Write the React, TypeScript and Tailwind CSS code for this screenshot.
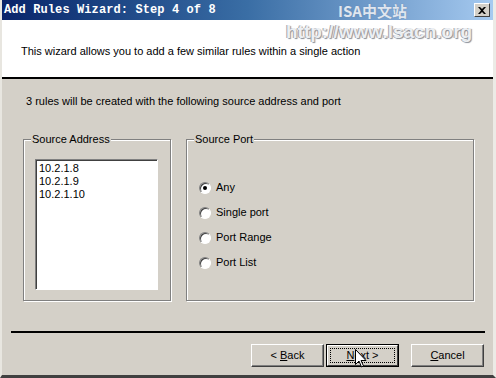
import React from 'react';

const ui = "font-['Liberation_Sans',Arial,sans-serif] text-[11px] leading-[13px] text-black";

function GroupBox({ label, className, children }: { label: string; className: string; children?: React.ReactNode }) {
  return (
    <div className={`relative border border-[#808080] shadow-[inset_1px_1px_0_#fff,1px_1px_0_#fff] ${className}`}>
      <span className="absolute -top-[7px] left-[7px] bg-[#d4d0c8] px-[1px]">{label}</span>
      {children}
    </div>
  );
}

function Radio({ label, checked }: { label: string; checked?: boolean }) {
  return (
    <div className="flex items-center gap-[5px] h-[13px]">
      <span className="w-[12px] h-[12px] rounded-full bg-white border border-t-[#808080] border-l-[#808080] border-b-white border-r-white shadow-[inset_1px_1px_0_#404040] flex items-center justify-center">
        {checked && <span className="w-[4px] h-[4px] rounded-full bg-black" />}
      </span>
      <span>{label}</span>
    </div>
  );
}

function Button({ children, isDefault }: { children: React.ReactNode; isDefault?: boolean }) {
  if (isDefault) {
    return (
      <div className="w-[73px] h-[23px] border border-black">
        <div className="w-full h-full border border-t-white border-l-white border-b-[#404040] border-r-[#404040] bg-[#d4d0c8] p-[2px]">
          <div className="w-full h-full border border-dotted border-black flex items-center justify-center">{children}</div>
        </div>
      </div>
    );
  }
  return (
    <div className="w-[73px] h-[23px] border border-t-white border-l-white border-b-[#404040] border-r-[#404040] shadow-[inset_-1px_-1px_0_#808080] bg-[#d4d0c8] flex items-center justify-center">
      {children}
    </div>
  );
}

export default function App() {
  return (
    <div className={`relative w-[496px] h-[378px] overflow-hidden bg-[#d4d0c8] border-l-[2px] border-l-[#e8e6e0] border-r-[3px] border-r-[#ecebe6] border-b-[3px] border-b-[#404040] flex flex-col ${ui}`}>
      {/* title bar */}
      <div className="h-[20px] shrink-0 bg-gradient-to-r from-[#0a246a] via-[#3a6ea5] to-[#a6caf0] flex items-center justify-between pl-[2px] pr-[3px]">
        <span className="font-['Liberation_Mono',monospace] font-bold text-[12px] text-white tracking-[0.1px]">Add Rules Wizard: Step 4 of 8</span>
        <div className="w-[16px] h-[14px] bg-[#d4d0c8] border border-t-white border-l-white border-b-[#404040] border-r-[#404040] flex items-center justify-center">
          <svg width="8" height="7" viewBox="0 0 8 7">
            <path d="M0 0h2l2 2 2-2h2L5 3.5 8 7H6L4 5 2 7H0l3-3.5z" fill="#000" />
          </svg>
        </div>
      </div>

      {/* header */}
      <div className="h-[57px] shrink-0 bg-white pl-[19px] pt-[25px]">
        This wizard allows you to add a few similar rules within a single action
      </div>
      <div className="h-[2px] shrink-0 bg-black" />

      {/* body */}
      <div className="flex-1 flex flex-col pl-[9px] pr-[9px]">
        <div className="pl-[15px] mt-[16px]">3 rules will be created with the following source address and port</div>

        <div className="flex gap-[15px] pl-[12px] mt-[31px]">
          <GroupBox label="Source Address" className="w-[148px] h-[162px] pt-[19px] pl-[11px]">
            <div className="w-[123px] h-[131px] bg-white border border-t-[#808080] border-l-[#808080] border-b-white border-r-white shadow-[inset_1px_1px_0_#404040] pl-[3px] pt-[2px]">
              <div>10.2.1.8</div>
              <div>10.2.1.9</div>
              <div>10.2.1.10</div>
            </div>
          </GroupBox>
          <GroupBox label="Source Port" className="w-[288px] h-[162px] pl-[12px] pt-[41px]">
            <div className="flex flex-col gap-[12px]">
              <Radio label="Any" checked />
              <Radio label="Single port" />
              <Radio label="Port Range" />
              <Radio label="Port List" />
            </div>
          </GroupBox>
        </div>

        <div className="h-[2px] bg-black mt-[30px] w-[474px]" />

        <div className="flex mt-[11px] pl-[240px]">
          <Button><span>&lt; <u>B</u>ack</span></Button>
          <div className="ml-[2px] relative">
            <Button isDefault><span><u>N</u>ext &gt;</span></Button>
            {/* mouse cursor */}
            <svg className="absolute left-[29px] top-[5px]" width="12" height="19" viewBox="0 0 12 19">
              <path d="M0.5 0.5v15l3.5-3.5 2.5 6 2-1-2.5-5.5h5z" fill="#fff" stroke="#000" strokeWidth="1" />
            </svg>
          </div>
          <div className="ml-[12px]">
            <Button><span><u>C</u>ancel</span></Button>
          </div>
        </div>
      </div>

      {/* watermark */}
      <div className="absolute left-[336px] top-[2px] font-['Noto_Sans_CJK_SC',sans-serif] font-bold text-[15px] leading-[17px] text-[#dfe6f0] [text-shadow:0_0_1px_#6a7fa0]">ISA中文站</div>
      <div className="absolute left-[284px] top-[21px] font-['Liberation_Sans',sans-serif] font-bold text-[19px] leading-[22px] text-[#eceff3] [text-shadow:1px_1px_1px_#8a8f98,-1px_0_0_#a0a4aa]">http://www.lsacn.org</div>
    </div>
  );
}
